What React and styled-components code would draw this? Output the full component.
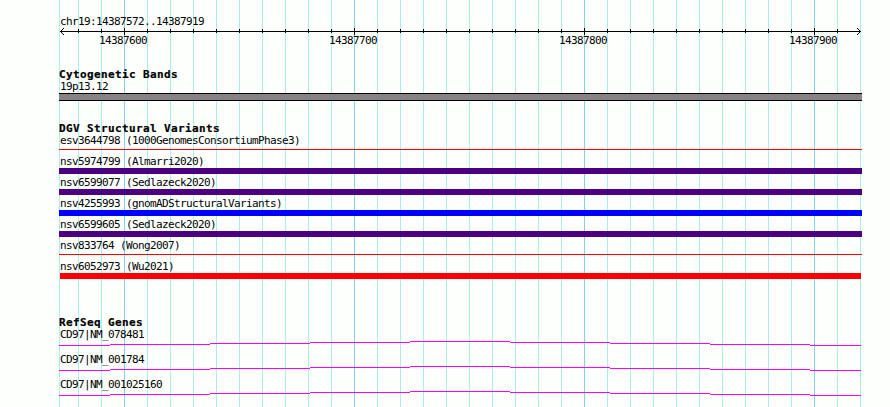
import React from "react";
import styled, { createGlobalStyle } from "styled-components";

const GlobalStyle = createGlobalStyle`
  body {
    margin: 0;
    background: #fdfffc;
  }
`;

const REGION = { left: 59, right: 860 };
const MINOR_STEP = 23;

const Browser = styled.main`
  box-sizing: border-box;
  width: 890px;
  height: 407px;
  padding: 15px 28px 0 59px;
  overflow: hidden;
  color: #000;
  font-family: "DejaVu Sans Mono", monospace;
  background-color: #fdfffc;
  background-image: linear-gradient(#afeeee, #afeeee),
    repeating-linear-gradient(
      to right,
      #87ceeb 0 1px,
      transparent 1px 230px
    ),
    repeating-linear-gradient(
      to right,
      #afeeee 0 1px,
      transparent 1px 23px
    );
  background-repeat: no-repeat;
  background-position: 59px 0, 124px 0, 78px 0;
  background-size: 1px 100%, 737px 100%, 783px 100%;
`;

const Label = styled.div`
  height: 12px;
  padding-left: 1px;
  font-size: 11px;
  line-height: 14px;
  letter-spacing: -0.622px;
  white-space: pre;
`;

const Title = styled.h2`
  height: 12px;
  margin: 0;
  font-size: 11px;
  font-weight: bold;
  line-height: 14px;
  letter-spacing: 0.378px;
  white-space: pre;
  -webkit-text-stroke: 0.2px #000;
`;

const Ruler = styled.header`
  height: 53px;
`;

const Axis = styled.svg`
  display: block;
  width: 803px;
  height: 8px;
  shape-rendering: crispEdges;
`;

const Positions = styled.div`
  display: grid;
  grid-template-columns: repeat(4, 230px);
  padding-left: 39px;
`;

const Position = styled(Label)`
  line-height: 12px;
`;

const Track = styled.section`
  height: ${({ $height }) => $height}px;
`;

const Band = styled.div`
  box-sizing: border-box;
  height: 8px;
  margin-top: 1px;
  border: solid #000;
  border-width: 1px 0;
  background: #868286;
`;

const Feature = styled.div`
  height: 21px;
`;

const Bar = styled.div`
  height: ${({ $thin }) => ($thin ? 1 : 6)}px;
  margin: ${({ $thin }) => ($thin ? 3 : 1)}px ${({ $inset }) => ($inset ? 1 : 0)}px 0;
  background: ${({ $color }) => $color};
`;

const Gene = styled.div`
  height: 25px;
`;

const Intron = styled.svg`
  display: block;
  width: 803px;
  height: 5px;
  margin-top: 1px;
  shape-rendering: crispEdges;
`;

const positions = ["14387600", "14387700", "14387800", "14387900"];

const variants = [
  { name: "esv3644798 (1000GenomesConsortiumPhase3)", color: "#ff0000", thin: true },
  { name: "nsv5974799 (Almarri2020)", color: "#4b0082" },
  { name: "nsv6599077 (Sedlazeck2020)", color: "#4b0082" },
  { name: "nsv4255993 (gnomADStructuralVariants)", color: "#0000ff" },
  { name: "nsv6599605 (Sedlazeck2020)", color: "#4b0082" },
  { name: "nsv833764 (Wong2007)", color: "#ff0000", thin: true },
  { name: "nsv6052973 (Wu2021)", color: "#ff0000", inset: true },
];

const genes = ["CD97|NM_078481", "CD97|NM_001784", "CD97|NM_001025160"];

const ticks = [];
for (let x = 78; x < REGION.right; x += MINOR_STEP) {
  ticks.push({ x: x - REGION.left, major: (x - 124) % 230 === 0 });
}

const ScaleAxis = () => (
  <Axis viewBox="0 0 803 8">
    <rect x="1" y="4" width="801" height="1" />
    {ticks.map(({ x, major }) => (
      <rect key={x} x={x} y={major ? 1 : 2} width="1" height={major ? 7 : 4} />
    ))}
    <path d="M2 3h1v1h-1zM3 2h1v1h-1zM4 1h1v1h-1zM2 5h1v1h-1zM3 6h1v1h-1zM4 7h1v1h-1z" />
    <path d="M800 3h1v1h-1zM799 2h1v1h-1zM798 1h1v1h-1zM800 5h1v1h-1zM799 6h1v1h-1zM798 7h1v1h-1z" />
  </Axis>
);

const App = () => {
  return (
    <>
      <GlobalStyle />
      <Browser>
        <Ruler>
          <Label>chr19:14387572..14387919</Label>
          <ScaleAxis />
          <Positions>
            {positions.map((position) => (
              <Position key={position}>{position}</Position>
            ))}
          </Positions>
        </Ruler>
        <Track $height={54}>
          <Title>Cytogenetic Bands</Title>
          <Label>19p13.12</Label>
          <Band />
        </Track>
        <Track $height={194}>
          <Title>DGV Structural Variants</Title>
          {variants.map(({ name, color, thin, inset }) => (
            <Feature key={name}>
              <Label>{name}</Label>
              <Bar $color={color} $thin={thin} $inset={inset} />
            </Feature>
          ))}
        </Track>
        <Track $height={91}>
          <Title>RefSeq Genes</Title>
          {genes.map((gene) => (
            <Gene key={gene}>
              <Label>{gene}</Label>
              <Intron viewBox="0 0 803 5">
                <path
                  d="M0 4.5H51M51 3.5H151M151 2.5H251M251 1.5H351M351 .5H451M451 1.5H551M551 2.5H651M651 3.5H751M751 4.5H802"
                  stroke="#ff00ff"
                />
              </Intron>
            </Gene>
          ))}
        </Track>
      </Browser>
    </>
  );
};

export default App;
